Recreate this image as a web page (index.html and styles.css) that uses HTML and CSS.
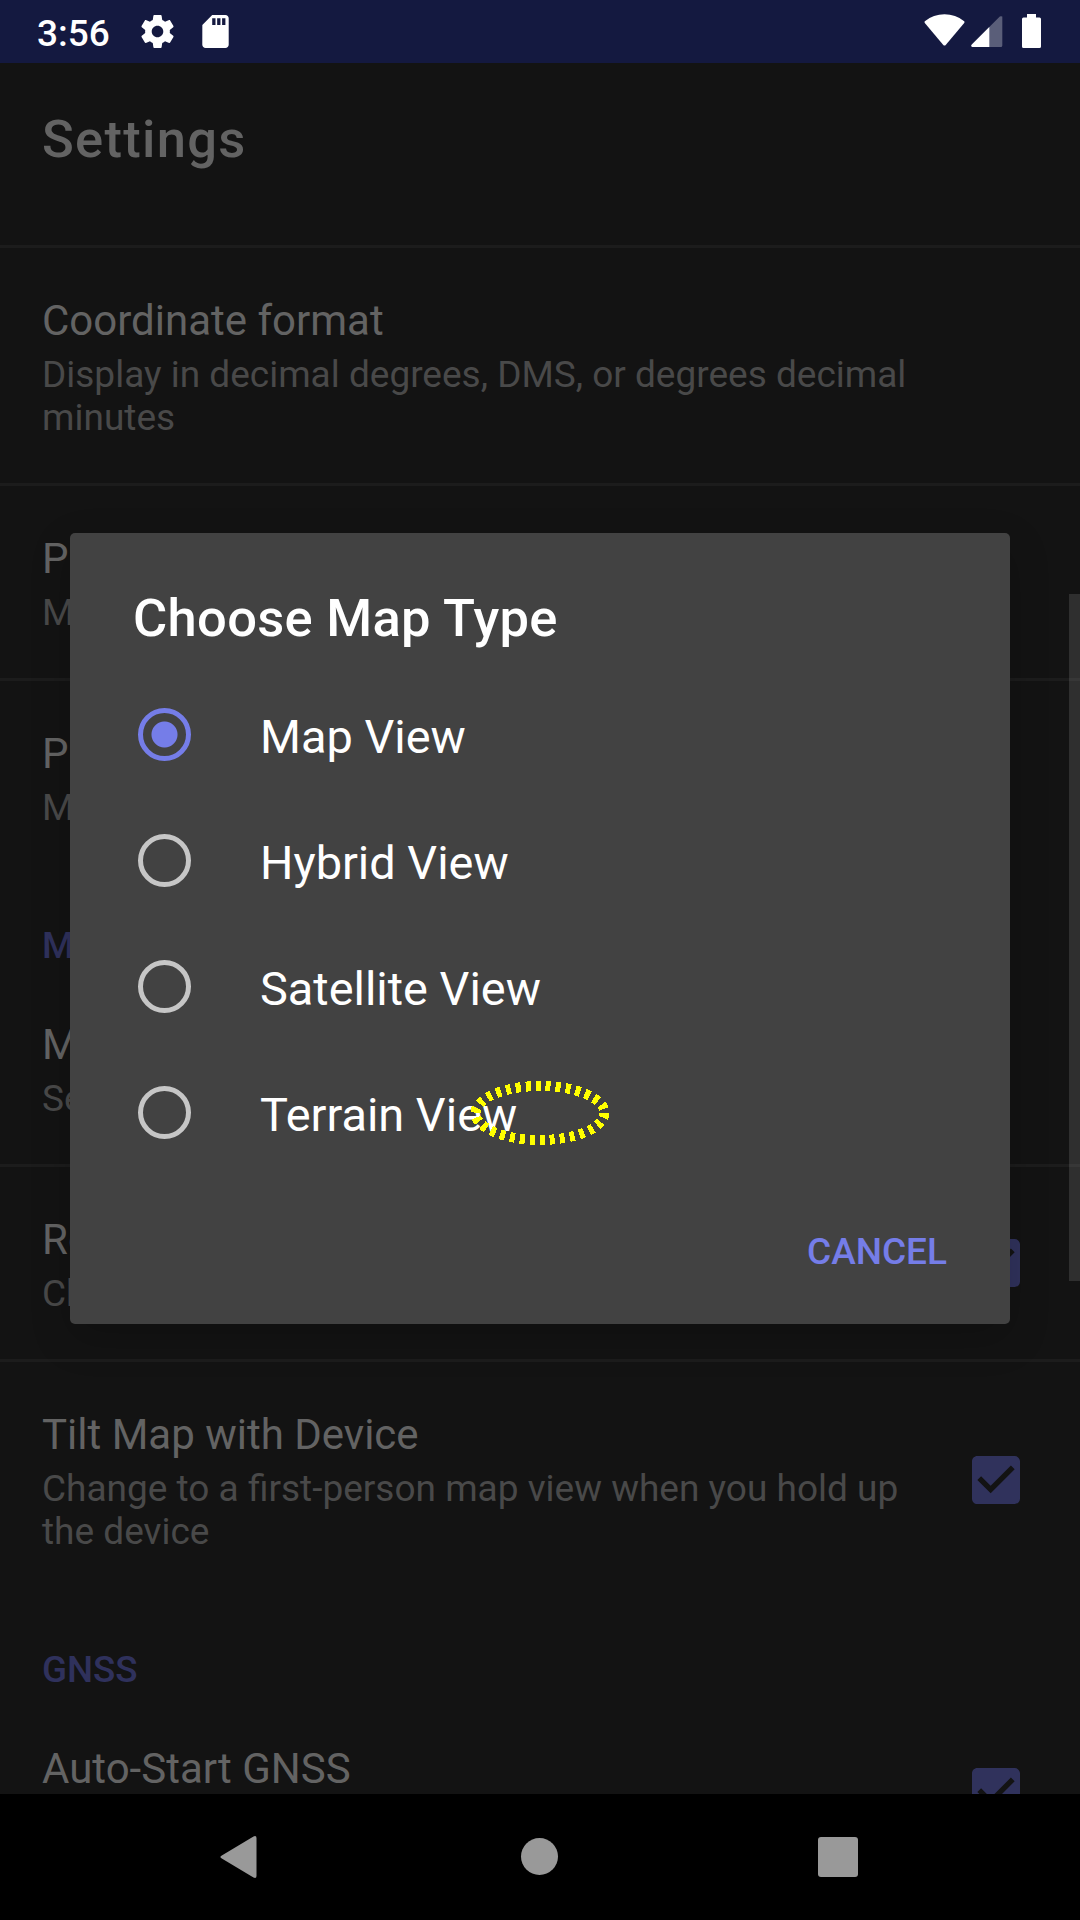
FILE: index.html
```html
<!DOCTYPE html>
<html lang="en">
<head>
<meta charset="utf-8">
<title>Settings</title>
<link rel="stylesheet" href="styles.css">
</head>
<body>
<svg width="0" height="0" class="defs">
  <symbol id="check" viewBox="0 0 24 24"><path d="M19 3H5c-1.110 0-2 .9-2 2v14c0 1.100.89 2 2 2h14c1.110 0 2-.9 2-2V5c0-1.100-.89-2-2-2zm-9 14l-5-5 1.410-1.410L10 14.170l7.590-7.590L19 8l-9 9z"/></symbol>
</svg>
<div class="screen">
  <header class="status">
    <span class="clock">3:56</span>
    <svg class="gear" viewBox="2 2 20 20"><path d="M19.430 12.980c.04-.32.07-.64.07-.98s-.03-.66-.07-.98l2.110-1.650c.19-.15.24-.42.12-.64l-2-3.460c-.12-.22-.39-.3-.61-.22l-2.490 1c-.52-.4-1.080-.73-1.690-.98l-.38-2.650C14.460 2.180 14.250 2 14 2h-4c-.25 0-.46.18-.49.42l-.38 2.650c-.61.25-1.170.59-1.690.98l-2.490-1c-.23-.09-.49 0-.61.22l-2 3.460c-.13.22-.07.49.12.64l2.110 1.650c-.04.32-.07.65-.07.98s.03.66.07.98l-2.110 1.650c-.19.15-.24.42-.12.64l2 3.460c.12.22.39.3.61.22l2.490-1c.52.4 1.080.73 1.690.98l.38 2.650c.03.24.24.42.49.42h4c.25 0 .46-.18.49-.42l.38-2.650c.61-.25 1.170-.59 1.690-.98l2.490 1c.23.09.49 0 .61-.22l2-3.460c.12-.22.07-.49-.12-.64l-2.110-1.650zM12 15.500c-1.930 0-3.500-1.570-3.500-3.500s1.570-3.500 3.500-3.500 3.500 1.570 3.500 3.500-1.570 3.500-3.500 3.500z"/></svg>
    <svg class="sd" viewBox="4 2 16 20"><path d="M18 2h-8L4.020 8 4 20c0 1.100.9 2 2 2h12c1.100 0 2-.9 2-2V4c0-1.100-.9-2-2-2zm-6 6h-2V4h2v4zm3 0h-2V4h2v4zm3 0h-2V4h2v4z"/></svg>
    <span class="spacer"></span>
    <svg class="wifi" viewBox="0 0 41 32"><path d="M0.800 7.200Q9.500 0.300 20.500 0.300T40.200 7.200Q40.900 8 40.200 8.900L21.500 31.200Q20.500 32 19.500 31.200L0.800 8.900Q0.100 8 0.800 7.200z"/></svg>
    <svg class="signal" viewBox="0 0 32 31"><path d="M0.600 28.800L28.800 0.600Q30 -.2 31.300 0.600V29.500Q31.300 31 29.800 31H1.300Q-.4 30.300.6 28.800z" opacity=".3"/><path d="M0.600 28.800L18.300 11.100V31H1.300Q-.4 30.300.6 28.800z"/></svg>
    <svg class="battery" viewBox="0 0 19 34"><path d="M5 0h9v3.500h3.500Q19 3.500 19 5v27.500Q19 34 17.500 34h-16Q0 34 0 32.500V5Q0 3.500 1.500 3.500H5z"/></svg>
  </header>
  <main class="settings">
    <h1 class="title">Settings</h1>
    <section class="pref divided">
      <div class="copy"><div class="name">Coordinate format</div><div class="summary">Display in decimal degrees, DMS, or degrees decimal minutes</div></div>
    </section>
    <section class="pref divided">
      <div class="copy"><div class="name">P</div><div class="summary">M</div></div>
    </section>
    <section class="pref divided">
      <div class="copy"><div class="name">P</div><div class="summary">M</div></div>
    </section>
    <h2 class="category">M</h2>
    <section class="pref">
      <div class="copy"><div class="name">M</div><div class="summary">Se</div></div>
    </section>
    <section class="pref divided">
      <div class="copy"><div class="name">Ro</div><div class="summary">Ch</div></div>
      <svg class="box"><use href="#check"/></svg>
    </section>
    <section class="pref divided">
      <div class="copy"><div class="name">Tilt Map with Device</div><div class="summary">Change to a first-person map view when you hold up the device</div></div>
      <svg class="box"><use href="#check"/></svg>
    </section>
    <h2 class="category">GNSS</h2>
    <section class="pref">
      <div class="copy"><div class="name">Auto-Start GNSS</div><div class="summary">&nbsp;</div></div>
      <svg class="box"><use href="#check"/></svg>
    </section>
    <div class="scrollbar"></div>
  </main>
  <nav class="navbar">
    <svg class="navicon" viewBox="0 0 44 44"><path d="M3.800 20.500L35.500 1.400Q38.500 .2 38.500 3V41Q38.500 43.800 35.500 42.600L3.800 23.500Q1 22 3.800 20.500z"/></svg>
    <svg class="navicon" viewBox="0 0 44 44"><circle cx="22.500" cy="21.500" r="18.500"/></svg>
    <svg class="navicon" viewBox="0 0 44 44"><rect x="2" y="2" width="40" height="40" rx="3"/></svg>
  </nav>
  <div class="dialog">
    <h2 class="dialog-title">Choose Map Type</h2>
    <div class="option selected"><span class="radio"></span><span class="label">Map View</span></div>
    <div class="option"><span class="radio"></span><span class="label">Hybrid View</span></div>
    <div class="option"><span class="radio"></span><span class="label">Satellite View</span></div>
    <div class="option"><span class="radio"></span><span class="label">Terrain View</span></div>
    <div class="actions">CANCEL</div>
  </div>
  <svg class="marker" viewBox="0 0 140 66"><ellipse cx="70" cy="33" rx="64.500" ry="27"/></svg>
</div>
</body>
</html>
```

FILE: styles.css
```css
* { box-sizing: border-box; }
body { margin: 0; background: #000; font-family: Roboto, sans-serif; }
h1, h2 { margin: 0; font-weight: 500; }
svg { display: block; flex: none; }
.defs { position: absolute; }
.screen { position: relative; width: 1080px; height: 1920px; display: flex; flex-direction: column; overflow: hidden; }

.status { height: 63px; flex: none; display: flex; align-items: flex-start; padding: 0 39px 0 37px; background: #141940; color: #fff; fill: #fff; }
.clock { width: 103.500px; margin-top: 12px; font-size: 37px; line-height: 44px; font-weight: 500; }
.gear { width: 33px; height: 33px; margin-top: 15px; }
.sd { width: 27px; height: 33px; margin: 15px 0 0 28px; }
.spacer { flex: 1; }
.wifi { width: 41px; height: 32px; margin-top: 14px; }
.signal { width: 32px; height: 31px; margin: 16px 0 0 6px; }
.battery { width: 19px; height: 34px; margin: 14px 0 0 19px; }

.settings { position: relative; height: 1731px; flex: none; overflow: hidden; background: #131313; }
.title { height: 182px; padding: 45px 42px 0; font-size: 52.500px; line-height: 62px; letter-spacing: 1.300px; color: #636363; }
.pref { display: flex; align-items: center; padding: 0 42px; }
.divided { border-top: 3px solid #1c1c1c; }
.copy { flex: 1; padding: 48px 0 44px; }
.name { font-size: 42px; line-height: 49px; color: #636363; }
.summary { margin-top: 8px; font-size: 37px; line-height: 43px; color: #494949; }
.category { height: 99px; padding: 51px 42px 0; font-size: 36.750px; line-height: 43px; color: #2f315c; }
.box { width: 64px; height: 64px; margin: 0 10px 0 44px; fill: #30325c; }
.scrollbar { position: absolute; right: 0; top: 531px; width: 11px; height: 687px; background: rgba(255, 255, 255, .12); }

.navbar { flex: 1; display: flex; justify-content: space-between; align-items: flex-start; padding: 41px 220px 0 218px; fill: #999; }
.navicon { width: 44px; height: 44px; }

.dialog { position: absolute; left: 70px; top: 533px; width: 940px; height: 791px; padding: 54px 63px 0; border-radius: 5px; background: #424242; color: #fff; box-shadow: 0 14px 40px rgba(0, 0, 0, .18); }
.dialog-title { height: 84.500px; font-size: 52.500px; line-height: 62px; letter-spacing: .3px; }
.option { height: 126px; display: flex; align-items: center; gap: 69px; padding-left: 5px; font-size: 46.900px; }
.label { padding-top: 3px; }
.radio { width: 53px; height: 53px; border: 5px solid #c6c6c6; border-radius: 50%; }
.selected .radio { border-color: #757de8; background: radial-gradient(circle, #757de8 12.500px, transparent 13.500px); }
.actions { margin-top: 54.500px; text-align: right; font-size: 37px; line-height: 43px; font-weight: 500; color: #757de8; }

.marker { position: absolute; left: 470px; top: 1080px; width: 140px; height: 66px; fill: none; stroke: #ff0; stroke-width: 10px; stroke-dasharray: 5 5; shape-rendering: crispEdges; }
```
